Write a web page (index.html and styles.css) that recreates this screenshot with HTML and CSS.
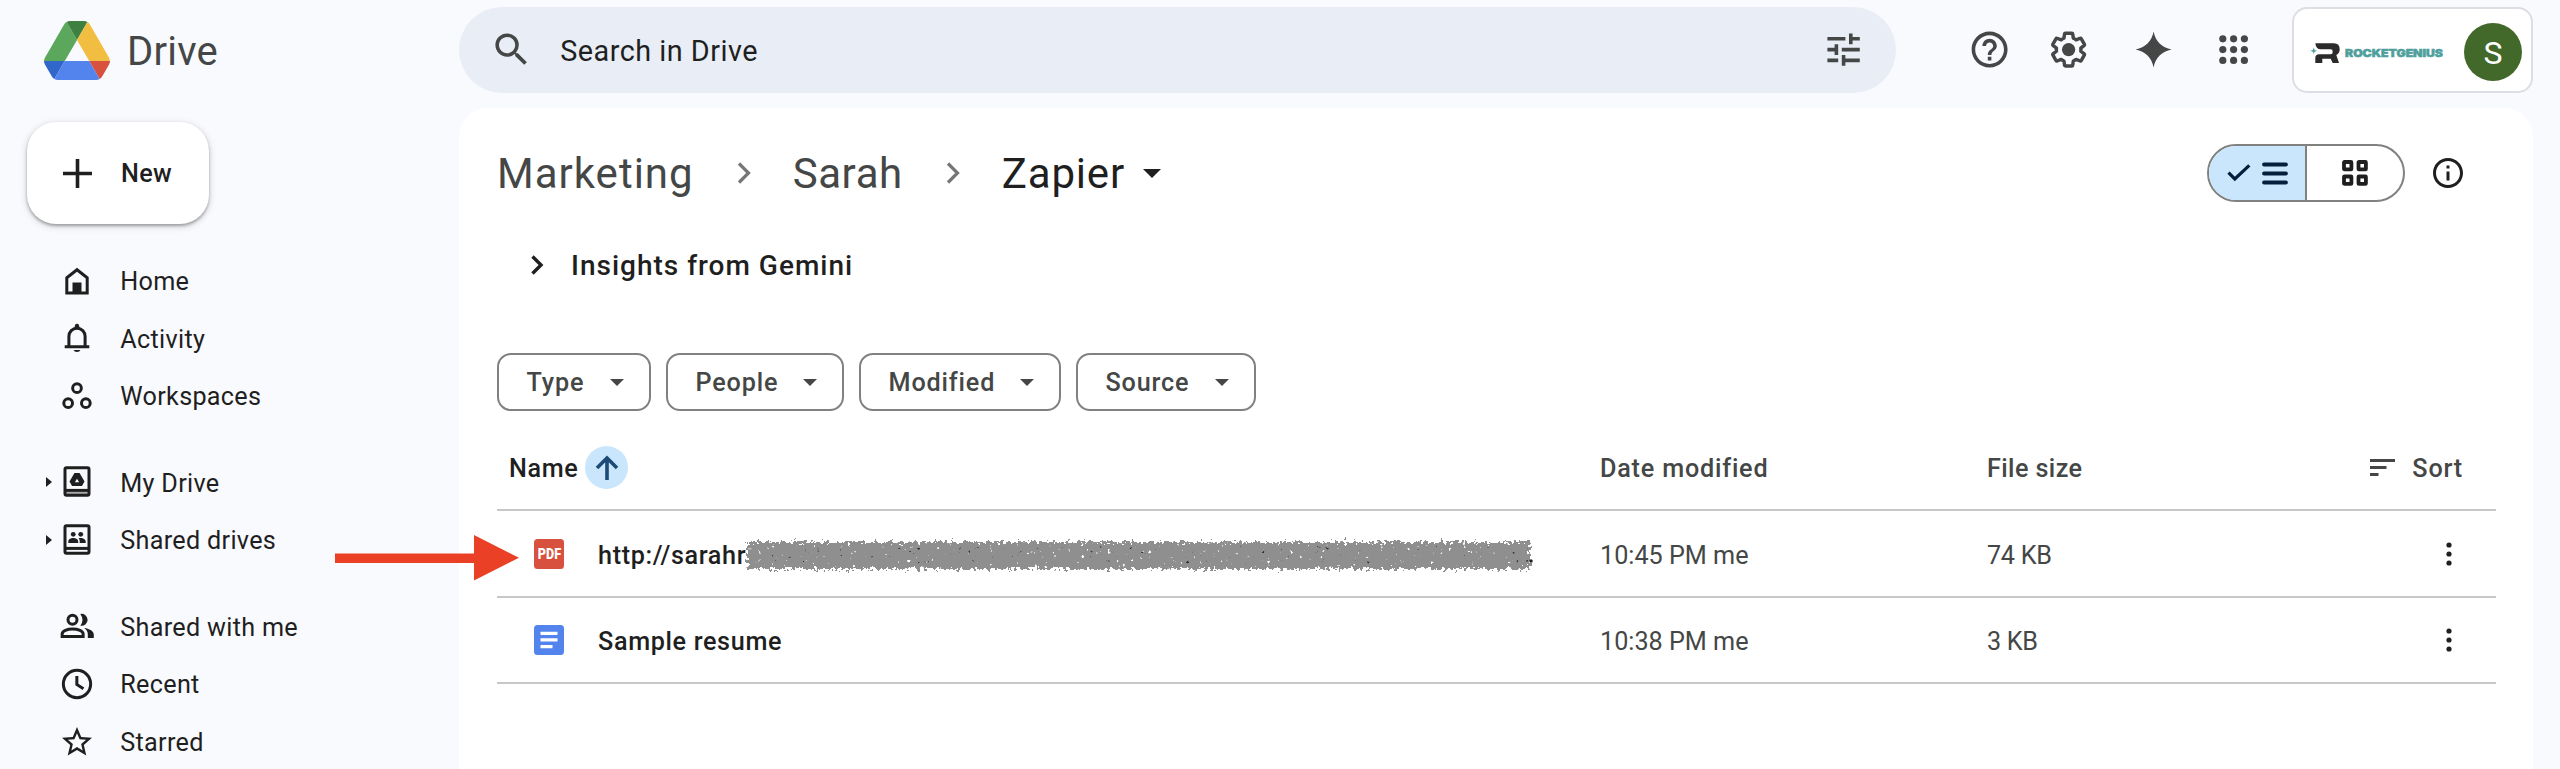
FILE: index.html
```html
<!DOCTYPE html>
<html lang="en">
<head>
    <meta charset="utf-8">
    <title>Zapier - Google Drive</title>
    <link rel="stylesheet" href="styles.css">
</head>
<body>
<header class="topbar">
    <div class="brand">
        <svg class="brand-logo" viewBox="0 0 87.3 78">
            <path d="m6.6 66.85 3.85 6.65c.8 1.4 1.95 2.5 3.3 3.3l13.75-23.8h-27.5c0 1.55.4 3.1 1.2 4.5z" fill="#3167cb"/>
            <path d="m43.65 25-13.75-23.8c-1.35.8-2.5 1.9-3.3 3.3l-25.4 44a9.06 9.06 0 0 0-1.2 4.5h27.5z" fill="#5ba85c"/>
            <path d="m73.55 76.8c1.35-.8 2.5-1.9 3.3-3.3l1.6-2.75 7.65-13.25c.8-1.4 1.2-2.95 1.2-4.5h-27.5z" fill="#d8503e"/>
            <path d="m43.65 25 13.75-23.8c-1.35-.8-2.9-1.2-4.5-1.2h-18.5c-1.6 0-3.15.45-4.5 1.2z" fill="#3e8040"/>
            <path d="m59.8 53h-32.3l-13.75 23.8c1.35.8 2.9 1.2 4.5 1.2h50.8c1.6 0 3.15-.45 4.5-1.2z" fill="#5383ec"/>
            <path d="m73.4 26.5-12.7-22c-.8-1.4-1.95-2.5-3.3-3.3l-13.75 23.8 16.15 28h27.45c0-1.55-.4-3.1-1.2-4.5z" fill="#f2be42"/>
        </svg>
        <span class="brand-name">Drive</span>
    </div>
    <div class="search">
        <svg class="icon-lg" viewBox="0 0 24 24"><path d="M15.5 14h-.79l-.28-.27A6.47 6.47 0 0 0 16 9.5 6.5 6.5 0 1 0 9.5 16c1.61 0 3.09-.59 4.23-1.57l.27.28v.79l5 4.99L20.49 19l-4.99-5zm-6 0C7.01 14 5 11.99 5 9.5S7.01 5 9.5 5 14 7.01 14 9.5 11.99 14 9.5 14z"/></svg>
        <span class="search-text">Search in Drive</span>
        <svg class="icon-lg" viewBox="0 0 24 24"><path d="M3 17v2h6v-2H3zM3 5v2h10V5H3zm10 16v-2h8v-2h-8v-2h-2v6h2zM7 9v2H3v2h4v2h2V9H7zm14 4v-2H11v2h10zm-6-4h2V7h4V5h-4V3h-2v6z"/></svg>
    </div>
    <div class="tools">
        <svg class="icon-lg" viewBox="0 0 24 24"><path d="M11 18h2v-2h-2v2zm1-16C6.48 2 2 6.48 2 12s4.48 10 10 10 10-4.48 10-10S17.52 2 12 2zm0 18c-4.41 0-8-3.59-8-8s3.59-8 8-8 8 3.59 8 8-3.59 8-8 8zm0-14c-2.21 0-4 1.79-4 4h2c0-1.1.9-2 2-2s2 .9 2 2c0 2-3 1.75-3 5h2c0-2.25 3-2.5 3-5 0-2.21-1.79-4-4-4z"/></svg>
        <svg class="icon-lg tool-gear" viewBox="0 0 24 24">
            <path transform="translate(1.1 1.1) scale(.91)" fill="none" stroke="currentColor" stroke-width="2.1" stroke-linejoin="round" d="M19.43 12.98c.04-.32.07-.64.07-.98s-.03-.66-.07-.98l2.11-1.65c.19-.15.24-.42.12-.64l-2-3.46c-.12-.22-.39-.3-.61-.22l-2.49 1c-.52-.4-1.08-.73-1.69-.98l-.38-2.65C14.46 2.18 14.25 2 14 2h-4c-.25 0-.46.18-.49.42l-.38 2.65c-.61.25-1.17.59-1.69.98l-2.49-1c-.23-.09-.49 0-.61.22l-2 3.46c-.13.22-.07.49.12.64l2.11 1.65c-.04.32-.07.65-.07.98s.03.66.07.98l-2.11 1.65c-.19.15-.24.42-.12.64l2 3.46c.12.22.39.3.61.22l2.49-1c.52.4 1.08.73 1.69.98l.38 2.65c.03.24.24.42.49.42h4c.25 0 .46-.18.49-.42l.38-2.65c.61-.25 1.17-.59 1.69-.98l2.49 1c.23.09.49 0 .61-.22l2-3.46c.12-.22.07-.49-.12-.64l-2.11-1.65z"/>
            <circle cx="12" cy="12" r="3.7"/>
        </svg>
        <svg class="icon-lg tool-spark" viewBox="0 0 24 24"><path d="M12 2C13 7.4 16.6 11 22 12 16.6 13 13 16.6 12 22 11 16.6 7.4 13 2 12 7.4 11 11 7.4 12 2z"/></svg>
        <svg class="icon-lg tool-apps" viewBox="0 0 24 24">
            <circle cx="6" cy="6" r="2"/><circle cx="12" cy="6" r="2"/><circle cx="18" cy="6" r="2"/>
            <circle cx="6" cy="12" r="2"/><circle cx="12" cy="12" r="2"/><circle cx="18" cy="12" r="2"/>
            <circle cx="6" cy="18" r="2"/><circle cx="12" cy="18" r="2"/><circle cx="18" cy="18" r="2"/>
        </svg>
    </div>
    <div class="account">
        <svg class="account-logo" viewBox="0 0 134 22">
            <path fill="#2b2b2b" d="M5.3 1.3H24Q29.7 1.3 29.7 7.3Q29.7 11.3 26.3 13L29 21H22.7L20.7 16.7H12.3V21H5.3V16Q5.300 12.3 9.3 12.3H20.7Q22.7 12.3 22.7 9.7Q22.7 7.3 20.7 7.3H10.7Q6 7.3 5.3 1.3z"/>
            <path fill="#4f9f9d" d="M3.7 5.5l.9 2.4 2.4.9-2.4.9-.9 2.4-.9-2.4-2.4-.9 2.4-.9z"/>
            <text x="35" y="15.2" textLength="98" lengthAdjust="spacingAndGlyphs" class="account-name">ROCKETGENIUS</text>
        </svg>
        <span class="avatar">S</span>
    </div>
</header>

<div class="body">
    <aside class="sidebar">
        <button class="new-btn">
            <svg class="icon-plus" viewBox="0 0 29 29"><path d="M12.7 0h3.6v12.7H29v3.6H16.3V29h-3.6V16.3H0v-3.6h12.7z"/></svg>
            <span class="new-text">New</span>
        </button>
        <nav class="nav">
            <div class="nav-item">
                <svg class="icon" viewBox="0 0 24 24"><path class="line" d="M5.2 20V9.8L12 4.5l6.8 5.3V20z"/><path d="M9 13h6v7.5H9z"/></svg>
                <span>Home</span>
            </div>
            <div class="nav-item">
                <svg class="icon" viewBox="0 0 24 24"><path class="line" d="M6.6 17.8V11c0-3.2 2.3-5.5 5.4-5.5s5.4 2.3 5.4 5.5v6.8M3.8 17.9h16.4"/><path d="M10.2 5.5l.5-2.2a1.4 1.4 0 0 1 2.6 0l.5 2.2zM9.7 20h4.6a2.4 1.9 0 0 1-4.6 0z"/></svg>
                <span>Activity</span>
            </div>
            <div class="nav-item">
                <svg class="icon" viewBox="0 0 24 24"><circle class="line" cx="12" cy="6.8" r="2.9"/><circle class="line" cx="6.1" cy="16.8" r="2.9"/><circle class="line" cx="17.9" cy="16.8" r="2.9"/></svg>
                <span>Workspaces</span>
            </div>
            <div class="nav-item nav-gap">
                <i class="caret"></i>
                <svg class="icon" viewBox="0 0 24 24"><path fill="#a9a9ab" d="M4 18.5h16v2H4z"/><rect class="line" x="4" y="2.5" width="16" height="18.4" rx="1"/><path class="line" d="M4 17.6h16"/><path fill-rule="evenodd" d="M10.3 6h3.4l3.3 5.6-1.7 3.1H8.7L7 11.6zM12 9.8l-1.4 2.4h2.8z"/></svg>
                <span>My Drive</span>
            </div>
            <div class="nav-item">
                <i class="caret"></i>
                <svg class="icon" viewBox="0 0 24 24"><rect class="line" x="4" y="2.5" width="16" height="18.4" rx="1"/><path class="line" d="M4 17.6h16"/><circle cx="9.5" cy="8.2" r="1.6"/><circle cx="14.5" cy="8.2" r="1.6"/><path d="M6.2 14v-1c0-1.5 1.7-2.3 3.3-2.3s3.3.8 3.3 2.3v1zM13.8 14v-1.2c0-.8-.3-1.4-.8-1.9 2-.6 4.8.3 4.8 2.1v1z"/></svg>
                <span>Shared drives</span>
            </div>
            <div class="nav-item nav-gap">
                <svg class="icon" viewBox="0 0 24 24"><circle class="line" cx="9" cy="7.9" r="3"/><path d="M14.2 4A4 4 0 1 1 14.2 11.8 6.5 6.5 0 0 0 14.2 4z"/><path class="line" d="M2.1 19v-1.7c0-2 3.4-3.3 7-3.3s7 1.3 7 3.3V19z"/><path d="M16.8 13.3c3.2.5 6.4 1.8 6.4 4.3V20h-4v-2.6c0-1.7-1-3.1-2.4-4.1z"/></svg>
                <span>Shared with me</span>
            </div>
            <div class="nav-item">
                <svg class="icon" viewBox="0 0 24 24"><circle class="line" cx="12" cy="12" r="9.1"/><path class="line" d="M11.9 6.6v5.7l4.4 2.8"/></svg>
                <span>Recent</span>
            </div>
            <div class="nav-item">
                <svg class="icon" viewBox="0 0 24 24"><path d="M22 9.24l-7.19-.62L12 2 9.19 8.63 2 9.24l5.46 4.73L5.82 21 12 17.27 18.18 21l-1.63-7.03L22 9.24zM12 15.4l-3.76 2.27 1-4.28-3.32-2.88 4.38-.38L12 6.1l1.71 4.04 4.38.38-3.32 2.88 1 4.28L12 15.4z"/></svg>
                <span>Starred</span>
            </div>
        </nav>
    </aside>

    <main class="panel">
        <div class="crumbs">
            <span class="crumb crumb-parent">Marketing</span>
            <svg class="crumb-sep" viewBox="0 0 14 22"><path d="M2 1.5l9.5 9.5L2 20.5"/></svg>
            <span class="crumb">Sarah</span>
            <svg class="crumb-sep" viewBox="0 0 14 22"><path d="M2 1.5l9.5 9.5L2 20.5"/></svg>
            <span class="crumb crumb-current">Zapier</span>
            <svg class="crumb-caret" viewBox="0 0 18 9"><path d="M0 0h18l-9 9z"/></svg>
            <div class="view-toggle">
                <div class="view-list">
                    <svg width="24" height="18" viewBox="0 0 24 18"><path d="M1.5 8.7l6.3 6.3L22.3 1.3"/></svg>
                    <svg width="26" height="23" viewBox="0 0 26 23"><path d="M2 2.5h22M2 11.500h22M2 20.5h22" stroke-width="3.8" stroke-linecap="round"/></svg>
                </div>
                <div class="view-grid">
                    <svg width="26" height="26" viewBox="0 0 26 26"><rect x="2" y="2" width="7.4" height="7.4" rx=".5"/><rect x="16.5" y="2" width="7.4" height="7.4" rx=".5"/><rect x="2" y="16.5" width="7.4" height="7.4" rx=".5"/><rect x="16.5" y="16.5" width="7.4" height="7.4" rx=".5"/></svg>
                </div>
            </div>
            <svg class="info" viewBox="0 0 24 24"><path d="M11 7h2v2h-2zm0 4h2v6h-2zm1-9C6.48 2 2 6.48 2 12s4.48 10 10 10 10-4.48 10-10S17.52 2 12 2zm0 18c-4.41 0-8-3.59-8-8s3.59-8 8-8 8 3.59 8 8-3.59 8-8 8z"/></svg>
        </div>

        <div class="gemini">
            <svg class="gemini-arrow" viewBox="0 0 14 20"><path d="M2.5 1.5l8.5 8.5-8.5 8.5"/></svg>
            <span class="gemini-text">Insights from Gemini</span>
        </div>

        <div class="filters">
            <div class="chip chip-type"><span>Type</span><i></i></div>
            <div class="chip chip-people"><span>People</span><i></i></div>
            <div class="chip chip-modified"><span>Modified</span><i></i></div>
            <div class="chip chip-source"><span>Source</span><i></i></div>
        </div>

        <div class="files">
            <div class="row row-head">
                <div class="cell cell-name">
                    <span class="head-name">Name</span>
                    <div class="sort-dir"><svg width="24" height="26" viewBox="0 0 24 26"><path d="M12 25V3M2 13L12 3l10 10"/></svg></div>
                </div>
                <div class="cell"><span>Date modified</span></div>
                <div class="cell"><span class="head-size">File size</span></div>
                <div class="cell sort">
                    <svg width="25" height="17" viewBox="0 0 25 17"><path d="M0 0h25v3H0zM0 7h16.5v3H0zM0 14h8.5v3H0z"/></svg>
                    <span>Sort</span>
                </div>
            </div>
            <div class="row">
                <div class="cell cell-name">
                    <svg class="file-icon" viewBox="0 0 30 30">
                        <rect width="30" height="30" rx="3.5" fill="#d8503e"/>
                        <text x="3.7" y="19.8" textLength="23.4" lengthAdjust="spacingAndGlyphs" class="pdf-text">PDF</text>
                    </svg>
                    <span>http://sarahr</span>
                    <!-- rest of the url is scribbled out -->
                    <svg class="scribble" viewBox="0 0 792 38">
                        <filter id="rough" x="0" y="0" width="792" height="38" filterUnits="userSpaceOnUse" color-interpolation-filters="sRGB">
                            <feTurbulence type="fractalNoise" baseFrequency=".3" numOctaves="2" seed="4" result="n"/>
                            <feDisplacementMap in="SourceGraphic" in2="n" scale="12" xChannelSelector="R" yChannelSelector="G" result="d"/>
                            <feTurbulence type="fractalNoise" baseFrequency=".22" numOctaves="2" seed="9"/>
                            <feColorMatrix values="0 0 0 0 0  0 0 0 0 0  0 0 0 0 0  12 0 0 0 -8.6" result="holes"/>
                            <feComposite in="d" in2="holes" operator="out"/>
                        </filter>
                        <filter id="specks" x="0" y="0" width="792" height="38" filterUnits="userSpaceOnUse" color-interpolation-filters="sRGB">
                            <feTurbulence type="fractalNoise" baseFrequency=".22" numOctaves="2" seed="21"/>
                            <feColorMatrix values="0 0 0 0 .2  0 0 0 0 .2  0 0 0 0 .2  0 12 0 0 -8.9" result="s"/>
                            <feComposite in="s" in2="SourceGraphic" operator="in"/>
                        </filter>
                        <rect x="3" y="5" width="783" height="27" fill="#8f8f8f" filter="url(#rough)"/>
                        <rect x="5" y="9" width="779" height="18" filter="url(#specks)"/>
                        <circle cx="787" cy="24" r="1.8" fill="#222"/>
                    </svg>
                </div>
                <div class="cell cell-meta"><span>10:45 PM me</span></div>
                <div class="cell cell-meta"><span class="size">74 KB</span></div>
                <div class="cell"><svg class="dots" viewBox="0 0 6 24"><circle cx="3" cy="3" r="2.6"/><circle cx="3" cy="12" r="2.6"/><circle cx="3" cy="21" r="2.6"/></svg></div>
            </div>
            <div class="row">
                <div class="cell cell-name">
                    <svg class="file-icon" viewBox="0 0 30 30">
                        <rect width="30" height="30" rx="3.5" fill="#5383ec"/>
                        <path fill="#fff" d="M6.5 6.700h17V10h-17zM6.5 13.3h17v3.3h-17zM6.5 20h12v3.3h-12z"/>
                    </svg>
                    <span>Sample resume</span>
                </div>
                <div class="cell cell-meta"><span>10:38 PM me</span></div>
                <div class="cell cell-meta"><span class="size">3 KB</span></div>
                <div class="cell"><svg class="dots" viewBox="0 0 6 24"><circle cx="3" cy="3" r="2.6"/><circle cx="3" cy="12" r="2.6"/><circle cx="3" cy="21" r="2.6"/></svg></div>
            </div>
        </div>
    </main>
</div>

<svg class="pointer" viewBox="0 0 184 46"><path d="M0 18.5h139V0l45 22.7L139 45.5V28H0z"/></svg>
</body>
</html>
```
FILE: styles.css
```css
body {
    margin: 0;
    width: 2560px;
    height: 769px;
    overflow: hidden;
    position: relative;
    background-color: #f9fafe;
    color: #1f1f1f;
    font-family: Roboto, "Liberation Sans", sans-serif;
    font-size: 25.2px;
}
svg {
    display: block;
    flex: none;
    fill: currentColor;
}
span {
    white-space: nowrap;
}
.icon {
    width: 36px;
    height: 36px;
}
.icon-lg {
    width: 43.2px;
    height: 43.2px;
}
.line {
    fill: none;
    stroke: currentColor;
    stroke-width: 2;
}

/* top bar */
.topbar {
    display: flex;
    height: 108px;
    box-sizing: border-box;
    padding: 7px 27px 0 0;
    color: #444746;
}
.brand {
    display: flex;
    align-items: center;
    width: 415px;
    height: 86px;
    padding-left: 44px;
}
.brand-logo {
    width: 66px;
    height: 59px;
}
.brand-name {
    padding-top: 2px;
    font-size: 40px;
    letter-spacing: 0.2px;
    margin-left: 17px;
}
.search {
    display: flex;
    align-items: center;
    box-sizing: border-box;
    width: 1437px;
    height: 86px;
    padding: 0 31px 0 31px;
    border-radius: 43px;
    background-color: #e9eef6;
}
.search-text {
    flex: 1;
    margin-left: 27px;
    padding-top: 2px;
    font-size: 28.8px;
    letter-spacing: 0.5px;
    color: #1f1f1f;
}
.tools {
    display: flex;
    align-items: center;
    height: 86px;
    margin-left: 72px;
}
.tool-gear {
    margin-left: 36px;
}
.tool-spark {
    margin-left: 41.4px;
}
.tool-apps {
    margin-left: 37.4px;
}
.account {
    display: flex;
    align-items: center;
    justify-content: space-between;
    box-sizing: border-box;
    width: 241px;
    height: 86px;
    margin-left: auto;
    padding: 3px 9px 0 16px;
    border: 2px solid #dcdee3;
    border-radius: 15px;
    background-color: #fff;
}
.account-logo {
    width: 134px;
    height: 22px;
    margin-top: 3px;
}
.account-name {
    font-family: Inter, sans-serif;
    font-size: 10.8px;
    font-weight: 900;
    fill: #4f9f9d;
    stroke: #4f9f9d;
    stroke-width: 0.5;
}
.avatar {
    width: 58px;
    height: 58px;
    border-radius: 50%;
    background-color: #42682a;
    color: #fff;
    font-size: 32px;
    line-height: 60px;
    text-align: center;
}

/* sidebar */
.body {
    display: flex;
    height: 661px;
}
.sidebar {
    width: 459px;
}
.new-btn {
    display: flex;
    align-items: center;
    box-sizing: border-box;
    width: 182px;
    height: 102px;
    margin: 14px 0 0 27px;
    padding: 0 0 0 36px;
    border: none;
    border-radius: 29px;
    background-color: #fff;
    color: #1f1f1f;
    font: 500 25.2px Roboto, "Liberation Sans", sans-serif;
    box-shadow: 0 2px 3px rgba(0, 0, 0, 0.3), 0 2px 6px 2px rgba(0, 0, 0, 0.1);
}
.icon-plus {
    width: 29px;
    height: 29px;
    margin-right: 28px;
}
.new-text {
    padding: 1px 0 0 1px;
    letter-spacing: 0.3px;
}
.nav {
    padding-top: 28px;
}
.nav-item {
    display: flex;
    align-items: center;
    position: relative;
    height: 57.6px;
    padding-left: 59.3px;
    letter-spacing: 0.3px;
}
.nav-item .icon {
    margin-right: 25px;
    overflow: visible;
}
.nav-item span {
    padding-top: 2px;
}
.nav-gap {
    margin-top: 28.8px;
}
.caret {
    position: absolute;
    left: 46px;
    border-left: 6px solid #1f1f1f;
    border-top: 5px solid transparent;
    border-bottom: 5px solid transparent;
}

/* main panel */
.panel {
    flex: 1;
    box-sizing: border-box;
    margin-right: 27px;
    padding: 36px 37px 0 38px;
    border-radius: 29px 29px 0 0;
    background-color: #fff;
}
.crumbs {
    display: flex;
    align-items: center;
    height: 58px;
    color: #444746;
}
.crumb {
    font-size: 42px;
    letter-spacing: 0.6px;
}
.crumb-parent {
    letter-spacing: 1px;
}
.crumb-sep {
    width: 14px;
    height: 22px;
    margin: 0 42px 0 43px;
    fill: none;
    stroke: #747775;
    stroke-width: 3.2;
}
.crumb-current {
    letter-spacing: 0.8px;
    color: #1f1f1f;
}
.crumb-caret {
    width: 18px;
    height: 9px;
    margin-left: 18px;
    color: #1f1f1f;
}
.view-toggle {
    display: flex;
    box-sizing: border-box;
    width: 198px;
    height: 58px;
    margin-left: auto;
    border: 2px solid #80827f;
    border-radius: 29px;
    overflow: hidden;
    color: #1f1f1f;
}
.view-list {
    display: flex;
    align-items: center;
    box-sizing: border-box;
    width: 98px;
    padding-left: 18px;
    gap: 11px;
    border-right: 2px solid #80827f;
    background-color: #cae6fc;
}
.view-list svg {
    fill: none;
    stroke: #041e3c;
    stroke-width: 3.2;
}
.view-grid {
    flex: 1;
    display: flex;
    align-items: center;
    justify-content: center;
}
.view-grid svg {
    fill: none;
    stroke: #1f1f1f;
    stroke-width: 3.8;
}
.info {
    width: 36px;
    height: 36px;
    margin: 0 30px 0 25px;
    color: #1f1f1f;
}
.gemini {
    display: flex;
    align-items: center;
    height: 58px;
    margin-top: 34px;
    padding-left: 33px;
}
.gemini-arrow {
    width: 14px;
    height: 20px;
    fill: none;
    stroke: #1f1f1f;
    stroke-width: 3.4;
}
.gemini-text {
    margin-left: 27px;
    font-size: 28px;
    font-weight: 500;
    letter-spacing: 1px;
}

/* filter chips */
.filters {
    display: flex;
    gap: 15px;
    height: 58px;
    margin-top: 59px;
}
.chip {
    display: flex;
    align-items: center;
    justify-content: space-between;
    box-sizing: border-box;
    padding: 0 25px 0 27.5px;
    border: 2px solid #80827f;
    border-radius: 14px;
    color: #444746;
    font-weight: 500;
    letter-spacing: 0.85px;
}
.chip i {
    border-top: 7px solid #444746;
    border-left: 7px solid transparent;
    border-right: 7px solid transparent;
}
.chip-type {
    width: 154px;
}
.chip-people {
    width: 178px;
}
.chip-modified {
    width: 202px;
}
.chip-source {
    width: 180px;
}

/* file list */
.files {
    margin-top: 14px;
}
.row {
    display: grid;
    grid-template-columns: 1103px 387px 1fr auto;
    align-items: center;
    box-sizing: border-box;
    height: 86.4px;
    padding-top: 1px;
    border-bottom: 2px solid #c7c7c7;
    color: #444746;
}
.row-head {
    font-weight: 500;
    letter-spacing: 0.8px;
}
.cell {
    display: flex;
    align-items: center;
}
.cell span {
    padding-top: 2px;
}
.cell-name {
    color: #1f1f1f;
    font-weight: 500;
    letter-spacing: 0.65px;
}
.cell-meta {
    font-weight: 400;
}
.size {
    letter-spacing: -0.3px;
}
.head-name {
    margin-left: 12px;
}
.head-size {
    letter-spacing: 0.4px;
}
.sort-dir {
    display: flex;
    align-items: center;
    justify-content: center;
    width: 43px;
    height: 43px;
    margin-left: 7px;
    border-radius: 50%;
    background-color: #cae6fc;
}
.sort-dir svg {
    fill: none;
    stroke: #1d4a77;
    stroke-width: 3.6;
}
.sort {
    gap: 17px;
    padding-right: 33px;
}
.dots {
    width: 6px;
    height: 24px;
    margin-right: 44px;
    color: #1f1f1f;
}
.file-icon {
    width: 30px;
    height: 30px;
    margin: 0 34px 0 37px;
}
.pdf-text {
    font-size: 14px;
    font-weight: 900;
    letter-spacing: 0;
    fill: #fff;
}
.scribble {
    width: 792px;
    height: 38px;
    margin: 3px -20px 0 -2px;
}

/* red pointer over the sidebar and the list */
.pointer {
    position: absolute;
    left: 335px;
    top: 535px;
    width: 184px;
    height: 46px;
    color: #ea4025;
}
```
